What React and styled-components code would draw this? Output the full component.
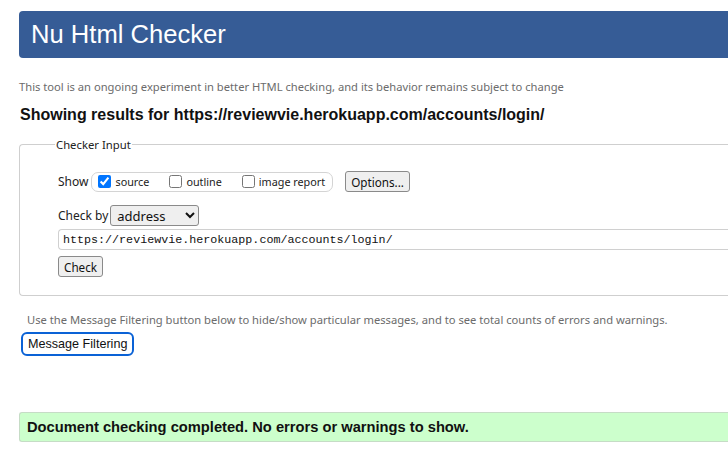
import React from 'react'
import styled, { createGlobalStyle } from 'styled-components'

const Global = createGlobalStyle`
  html, body {
    margin: 0;
    padding: 0;
    background: #fff;
    overflow: hidden;
  }
  body {
    font-family: "Noto Sans", "Open Sans", sans-serif;
  }
`

const Page = styled.div`
  width: 780px;
  padding: 11px 0 0 19px;
`

const Header = styled.h1`
  margin: 0;
  height: 47px;
  display: flex;
  align-items: center;
  padding-left: 12px;
  background: #365c96;
  border-radius: 4px 0 0 4px;
  color: #fff;
  font-family: "Liberation Sans", Arial, sans-serif;
  font-weight: 400;
  font-size: 25.6px;
  line-height: 1;
  padding-top: 1px;
  box-sizing: border-box;
`

const Intro = styled.p`
  margin: 21px 0 0 0;
  font-size: 11.2px;
  color: #6b6b6b;
  line-height: 15px;
`

const Results = styled.h2`
  margin: 11px 0 0 1px;
  font-family: "Liberation Sans", Arial, sans-serif;
  font-weight: 700;
  font-size: 16px;
  line-height: 20px;
  color: #111;
`

const Fieldset = styled.fieldset`
  margin: 12px 0 0 0;
  padding: 19px 0 18px 38px;
  border: 1px solid #cfcfcf;
  border-radius: 4px;
  border-right: none;
  min-width: 0;
`

const Legend = styled.legend`
  margin-left: -3px;
  padding: 0 1px;
  font-size: 11.3px;
  color: #222;
`

const Row = styled.div`
  display: flex;
  align-items: center;
  gap: ${p => p.$gap || 2}px;
  margin-top: ${p => p.$top || 0}px;
  font-size: 12px;
  color: #222;
`

const Pill = styled.div`
  display: flex;
  align-items: center;
  height: 18px;
  padding: 0 7px 0 6px;
  border: 1px solid #d4d4d4;
  border-radius: 7px;
  margin-right: 9px;
`

const Option = styled.label`
  display: flex;
  align-items: center;
  margin-right: ${p => p.$gap || 0}px;
  font-size: 10.8px;
  color: #222;

  input {
    width: 13px;
    height: 13px;
    margin: 0 4px 0 0;
  }
`

const NativeButton = styled.button`
  font-family: "Noto Sans", "Open Sans", sans-serif;
  font-size: 11.7px;
  height: ${p => p.$h || 21}px;
  padding: 0 ${p => p.$pad || 5}px;
  background: #efefef;
  border: 1px solid #8a8a8a;
  border-radius: 3px;
  color: #111;
`

const Select = styled.select`
  font-family: "Noto Sans", "Open Sans", sans-serif;
  font-size: 13px;
  width: 89px;
  height: 21px;
  padding: 0 2px;
  border: 1px solid #8a8a8a;
  border-radius: 3px;
  background: #efefef;
  color: #111;
`

const UrlInput = styled.input`
  display: block;
  width: 100%;
  box-sizing: border-box;
  height: 21px;
  margin-top: 3px;
  padding: 0 4px;
  border: 1px solid #d0d0d0;
  border-right: none;
  border-radius: 4px 0 0 4px;
  font-family: "Liberation Mono", "DejaVu Sans Mono", monospace;
  font-size: 11.7px;
  color: #111;
`

const Note = styled.p`
  margin: 16px 0 0 8px;
  font-size: 11.2px;
  color: #6b6b6b;
  line-height: 15px;
`

const FilterButton = styled.button`
  margin: 5px 0 0 2px;
  height: 24px;
  padding: 0 5px;
  background: #fff;
  border: 2px solid #0a62d6;
  border-radius: 6px;
  font-family: "Liberation Sans", Arial, sans-serif;
  font-size: 12.6px;
  color: #111;
`

const Success = styled.div`
  margin-top: 56px;
  height: 28px;
  display: flex;
  align-items: center;
  padding-left: 7px;
  background: #ccffcc;
  border: 1px solid #c6dcc6;
  border-right: none;
  border-radius: 3px 0 0 3px;
  font-family: "Liberation Sans", Arial, sans-serif;
  font-weight: 700;
  font-size: 14.7px;
  color: #111;
`

export default function App() {
  return (
    <Page>
      <Global />
      <Header>Nu Html Checker</Header>
      <Intro>
        This tool is an ongoing experiment in better HTML checking, and its behavior remains subject to change
      </Intro>
      <Results>Showing results for https://reviewvie.herokuapp.com/accounts/login/</Results>
      <Fieldset>
        <Legend>Checker Input</Legend>
        <Row $gap={3}>
          <span>Show</span>
          <Pill>
            <Option $gap={20}><input type="checkbox" defaultChecked />source</Option>
            <Option $gap={20}><input type="checkbox" />outline</Option>
            <Option><input type="checkbox" />image report</Option>
          </Pill>
          <NativeButton>Options...</NativeButton>
        </Row>
        <Row $top={13}>
          <span>Check by</span>
          <Select defaultValue="address">
            <option value="address">address</option>
            <option value="file">file upload</option>
            <option value="text">text input</option>
          </Select>
        </Row>
        <UrlInput defaultValue="https://reviewvie.herokuapp.com/accounts/login/" />
        <Row $top={6}>
          <NativeButton>Check</NativeButton>
        </Row>
      </Fieldset>
      <Note>
        Use the Message Filtering button below to hide/show particular messages, and to see total counts of errors and warnings.
      </Note>
      <FilterButton>Message Filtering</FilterButton>
      <Success>Document checking completed. No errors or warnings to show.</Success>
    </Page>
  )
}
